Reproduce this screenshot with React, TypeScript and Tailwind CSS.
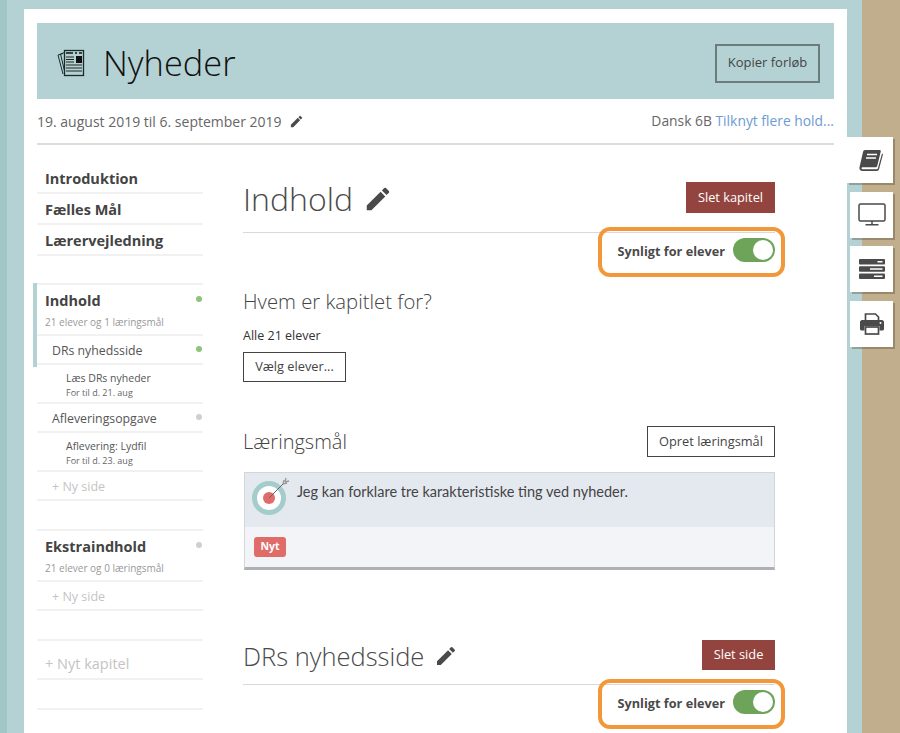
import { MdEdit } from "react-icons/md";

const openSans = "font-['Open_Sans',sans-serif]";

function NewsIcon() {
  return (
    <svg width="28" height="28" viewBox="0 0 28 28" className="shrink-0">
      <path d="M6 4.500 1 6l5 19" fill="none" stroke="#1a2a2a" strokeWidth="1" />
      <path d="M7.500 3.500 3.500 5l4.500 19" fill="none" stroke="#1a2a2a" strokeWidth="1" />
      <rect x="7.500" y="1.500" width="19" height="25" fill="#b4d2d4" stroke="#1a2a2a" strokeWidth="1.300" />
      <path d="M9 4h7M18 4h2M22 4h3" stroke="#111" strokeWidth="1.600" />
      <rect x="19" y="7" width="6" height="7" fill="#111" />
      <path d="M9 8h8M9 10.500h8M9 13h8M9 16h16M9 19h16M9 22h16" stroke="#222" strokeWidth="1" />
    </svg>
  );
}

function BookIcon() {
  return (
    <svg width="24" height="23" viewBox="0 0 24 23">
      <path
        d="M6 1h14.500c1 0 1.500.7 1.200 1.700l-3.400 14c-.3 1-1 1.500-2 1.500H4c-1.200 0-1.500.5-1.500 1s.5 1 1.500 1h13.500c.8 0 1.200-.3 1.400-1L23 4.500l1 .8-4 15c-.3 1.200-1.200 1.700-2.300 1.700H3.500C1.500 22 0 20.500.5 18.300L4 3c.3-1.200 1-2 2-2z"
        fill="#4a4a4a"
      />
      <path d="M8 5.500h10M7 9h10" stroke="#fff" strokeWidth="1.600" />
    </svg>
  );
}

function DesktopIcon() {
  return (
    <svg width="28" height="23" viewBox="0 0 28 23">
      <rect x="1" y="1" width="26" height="17" rx="1.500" fill="none" stroke="#4a4a4a" strokeWidth="1.500" />
      <path d="M14 18v3M7.500 21.700h13" stroke="#4a4a4a" strokeWidth="1.500" />
    </svg>
  );
}

function ServerIcon() {
  return (
    <svg width="26" height="20" viewBox="0 0 26 20">
      <rect y="0" width="26" height="5.500" rx="1" fill="#4a4a4a" />
      <rect y="7.200" width="26" height="5.500" rx="1" fill="#4a4a4a" />
      <rect y="14.500" width="26" height="5.500" rx="1" fill="#4a4a4a" />
      <path d="M18.500 2.700h5M11 10h12.500M15 17.200h8.500" stroke="#fff" strokeWidth="1.400" />
    </svg>
  );
}

function PrinterIcon() {
  return (
    <svg width="24" height="22" viewBox="0 0 24 22">
      <path d="M5.500 8V1h10l3 3v4" fill="none" stroke="#4a4a4a" strokeWidth="1.700" />
      <path d="M2 7h20c1 0 2 1 2 2v7c0 1-1 1.500-2 1.500h-2.500V13h-15v4.500H2c-1 0-2-.5-2-1.500V9c0-1 1-2 2-2z" fill="#4a4a4a" />
      <rect x="5.500" y="14" width="13" height="7" fill="none" stroke="#4a4a4a" strokeWidth="1.700" />
      <circle cx="20.500" cy="10" r="1" fill="#fff" />
    </svg>
  );
}

function TargetIcon() {
  return (
    <svg width="38" height="38" viewBox="0 0 38 38" className="shrink-0">
      <circle cx="17" cy="21" r="14.500" fill="#fff" stroke="#a3cccb" strokeWidth="5" />
      <circle cx="17" cy="21" r="6" fill="#e06c6a" />
      <path d="M17 21 32 6" stroke="#666" strokeWidth="1" />
      <path d="M31 7l1-4M31 7l4-1M33 5l1-4M33 5l4-1" stroke="#999" strokeWidth="1.300" />
    </svg>
  );
}

function Toggle() {
  return (
    <div className="flex h-6 w-[42px] items-center justify-end rounded-full bg-[#6ea35a] p-0.5">
      <div className="h-5 w-5 rounded-full bg-white" />
    </div>
  );
}

function VisibleRow() {
  return (
    <div className="relative flex h-[45px] items-center justify-end gap-2 pb-[11px]">
      <span className="pt-[3px] text-[12.700px] font-bold text-[#4a4a4a]">Synligt for elever</span>
      <Toggle />
      <div className="absolute -top-[6px] -right-[10px] h-[50px] w-[187px] rounded-xl border-4 border-[#f2983a]" />
    </div>
  );
}

function NavTop({ label }: { label: string }) {
  return (
    <div className="flex h-[31px] items-center border-b-2 border-[#f1f1f1] pl-2 pt-[2px] text-[14.500px] font-bold text-[#444]">
      {label}
    </div>
  );
}

function Dot({ green }: { green?: boolean }) {
  return <span className={green ? "h-1.5 w-1.5 rounded-full bg-[#8ec47a]" : "h-1.5 w-1.5 rounded-full bg-[#cfcfcf]"} />;
}

function Chapter({ title, sub, green }: { title: string; sub: string; green?: boolean }) {
  return (
    <div className="h-[51px] border-b-2 border-[#f1f1f1] pl-2">
      <div className="flex h-[30px] items-center justify-between pt-[1px] text-[14.500px] font-bold text-[#444]">
        {title}
        <span className="-mt-1 mr-[1px] flex"><Dot green={green} /></span>
      </div>
      <div className="text-[10px] leading-[14px] text-[#999]">{sub}</div>
    </div>
  );
}

function Page({ title, green }: { title: string; green?: boolean }) {
  return (
    <div className="flex h-[29px] items-center justify-between border-b-2 border-[#f1f1f1] pl-[15px] pt-[3px] text-[12.300px] text-[#555]">
      {title}
      <span className="-mt-1 mr-[1px] flex"><Dot green={green} /></span>
    </div>
  );
}

function Activity({ title, due }: { title: string; due: string }) {
  return (
    <div className="flex h-[39px] flex-col justify-center border-b-2 border-[#f1f1f1] pt-1 pl-[29px]">
      <div className="text-[10.500px] leading-[15px] text-[#555]">{title}</div>
      <div className="text-[9px] leading-[14px] text-[#666]">{due}</div>
    </div>
  );
}

function NewPage() {
  return (
    <div className="flex h-[29px] items-center border-b-2 border-[#f1f1f1] pl-[15px] pt-[3px] text-[12.500px] text-[#c4c4c4]">+ Ny side</div>
  );
}

function Sidebar() {
  return (
    <aside className="w-[166px] shrink-0 pt-[18px]">
      <NavTop label="Introduktion" />
      <NavTop label="Fælles Mål" />
      <NavTop label="Lærervejledning" />

      <div className="relative mt-[27px] border-t-2 border-[#f1f1f1]">
        <div className="absolute -top-[2px] -left-1 h-[84px] w-1 bg-[#b4d2d4]" />
        <Chapter title="Indhold" sub="21 elever og 1 læringsmål" green />
        <Page title="DRs nyhedsside" green />
        <Activity title="Læs DRs nyheder" due="For til d. 21. aug" />
        <Page title="Afleveringsopgave" />
        <Activity title="Aflevering: Lydfil" due="For til d. 23. aug" />
        <NewPage />
      </div>

      <div className="mt-[28px] border-t-2 border-[#f1f1f1]">
        <Chapter title="Ekstraindhold" sub="21 elever og 0 læringsmål" />
        <NewPage />
      </div>

      <div className="mt-[28px] flex h-[41px] items-center border-y-2 border-[#f1f1f1] pl-2 pt-[9px] text-[14.500px] text-[#c4c4c4]">
        + Nyt kapitel
      </div>
      <div className="mt-[28px] border-t-2 border-[#f1f1f1]" />
    </aside>
  );
}

function Content() {
  return (
    <main className="ml-[40px] w-[532px] shrink-0">
      <div className="flex h-[88px] items-end justify-between border-b border-[#d9d9d9] pb-[19px]">
        <div className="-mb-[6px] flex items-center gap-[10px] text-[#4a4a4a]">
          <h1 className="text-[32px] leading-[40px] font-light">Indhold</h1>
          <MdEdit size={30} className="text-[#4a4a4a]" />
        </div>
        <button className="h-[31px] w-[89px] bg-[#93443e] text-[12.800px] text-white">Slet kapitel</button>
      </div>
      <VisibleRow />

      <h2 className="mt-[9px] text-[20.300px] leading-[28px] font-light text-[#444]">Hvem er kapitlet for?</h2>
      <p className="mt-[12px] text-[12.500px] leading-[18px] text-[#333]">Alle 21 elever</p>
      <button className="mt-[7px] block h-[30px] w-[103px] border border-[#444] text-[12.800px] text-[#444]">Vælg elever...</button>

      <div className="mt-[44px] flex items-center justify-between">
        <h2 className="text-[20px] leading-[28px] font-light text-[#444]">Læringsmål</h2>
        <button className="h-[31px] w-[128px] border border-[#444] text-[12.800px] text-[#444]">Opret læringsmål</button>
      </div>

      <div className="mt-[15px] ml-[1px] border border-b-[3px] border-[#d3d5d9] border-b-[#aeb0b3]">
        <div className="flex h-[54px] gap-[7px] bg-[#e4e9f0] pt-1 pl-[7px]">
          <TargetIcon />
          <p className="pt-[5px] font-['Lato',sans-serif] text-[14.500px] leading-[20px] text-[#444]">
            Jeg kan forklare tre karakteristiske ting ved nyheder.
          </p>
        </div>
        <div className="flex h-[40px] items-center bg-[#f3f4f8] pl-[9px]">
          <span className="flex h-[20px] w-[32px] items-center justify-center rounded-[3px] bg-[#e06c6a] text-[10.500px] font-bold text-white">Nyt</span>
        </div>
      </div>

      <div className="mt-[70px] flex h-[45px] items-start justify-between border-b border-[#d9d9d9]">
        <div className="flex items-center gap-[10px] text-[#4a4a4a]">
          <h1 className="text-[25.500px] leading-[32px] font-light">DRs nyhedsside</h1>
          <MdEdit size={24} className="text-[#4a4a4a]" />
        </div>
        <button className="h-[30px] w-[73px] bg-[#93443e] text-[12.800px] text-white">Slet side</button>
      </div>
      <VisibleRow />
    </main>
  );
}

function SideTab({ first, children }: { first?: boolean; children: React.ReactNode }) {
  return (
    <div
      className={
        first
          ? "flex h-[46px] w-[46px] items-center justify-center bg-white pl-[2px] shadow-[2px_2px_0_rgba(80,70,50,0.35)]"
          : "ml-[3px] flex h-[46px] w-[43px] items-center justify-center bg-white shadow-[2px_2px_0_rgba(80,70,50,0.35)]"
      }
    >
      {children}
    </div>
  );
}

export default function App() {
  return (
    <div className={`relative flex h-[733px] w-[900px] overflow-hidden bg-[#b4d2d4] ${openSans}`}>
      <div className="w-[7px] shrink-0 bg-[#a2c5c6]" />

      <div className="ml-[17px] mt-[9px] w-[823px] shrink-0 bg-white px-[13px] pt-[14px]">
        <header className="flex h-[76px] items-center justify-between bg-[#b4d2d4] pt-1 pr-[14px] pl-5">
          <div className="flex items-center gap-[18px]">
            <NewsIcon />
            <span className="text-[34.400px] leading-[44px] font-light text-[#111]">Nyheder</span>
          </div>
          <button className="h-[39px] w-[105px] border-2 border-[#6c7c7d] text-[13px] text-[#444]">Kopier forløb</button>
        </header>

        <div className="flex h-[46px] w-[797px] items-center justify-between border-b-2 border-[#dddcd6] text-[14px] text-[#666]">
          <div className="flex items-center gap-[7px]">
            <span>19. august 2019 til 6. september 2019</span>
            <MdEdit size={15} className="text-[#4a4a4a]" />
          </div>
          <div className="pt-[1px] text-[13.850px]">
            Dansk 6B <span className="text-[#6e9bd1]">Tilknyt flere hold...</span>
          </div>
        </div>

        <div className="flex">
          <Sidebar />
          <Content />
        </div>
      </div>

      <div className="ml-[15px] w-[38px] shrink-0 bg-[#c1ae8c]" />

      <div className="absolute top-[137px] left-[847px] flex flex-col gap-[8.500px]">
        <SideTab first><BookIcon /></SideTab>
        <SideTab><DesktopIcon /></SideTab>
        <SideTab><ServerIcon /></SideTab>
        <SideTab><PrinterIcon /></SideTab>
      </div>
    </div>
  );
}
